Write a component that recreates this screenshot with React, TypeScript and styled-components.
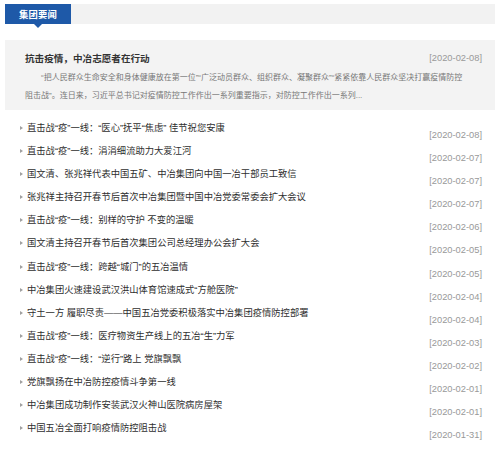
import React from "react";
import styled, { createGlobalStyle } from "styled-components";

const GlobalStyle = createGlobalStyle`
  body {
    margin: 0;
    background: #fff;
    font-family: "Liberation Sans", "Noto Sans CJK SC", sans-serif;
  }
`;

const Page = styled.div`
  width: 490px;
  padding: 4px 5px 0;
`;

const HeaderBar = styled.div`
  display: flex;
  height: 20px;
  background: #f2f2f2;
`;

const Tab = styled.div`
  position: relative;
  width: 66px;
  background: #1e59a8;
  color: #fff;
  font-size: 9.3px;
  font-weight: 700;
  display: flex;
  align-items: center;
  justify-content: center;
  letter-spacing: 0.2px;

  &::after {
    content: "";
    position: absolute;
    left: 29px;
    bottom: -4px;
    border-left: 4px solid transparent;
    border-right: 4px solid transparent;
    border-top: 4px solid #1e59a8;
  }
`;

const Featured = styled.div`
  margin-top: 16px;
  background: #f3f3f3;
  padding: 11px 13px 5px 20px;
  height: 70px;
  box-sizing: border-box;
`;

const FeaturedHead = styled.div`
  display: flex;
  justify-content: space-between;
  align-items: center;
  height: 14px;
`;

const FeaturedTitle = styled.div`
  font-size: 9.6px;
  font-weight: 700;
  color: #333;
`;

const Summary = styled.p`
  margin: 4px 0 0;
  padding-right: 16px;
  font-size: 8px;
  line-height: 18px;
  color: #777;
  text-indent: 2em;
`;

const List = styled.ul`
  list-style: none;
  margin: 11px 0 0;
  padding: 0 13px 0 15px;
`;

const Row = styled.li`
  display: flex;
  justify-content: space-between;
  align-items: flex-start;
  height: 23.1px;
`;

const Title = styled.span`
  display: flex;
  align-items: center;
  font-size: 9.3px;
  line-height: 14px;
  color: #2e2e2e;
  white-space: nowrap;

  &::before {
    content: "";
    width: 0;
    height: 0;
    border-top: 2.5px solid transparent;
    border-bottom: 2.5px solid transparent;
    border-left: 3px solid #a0a0a0;
    margin-right: 4px;
  }
`;

const DateText = styled.span<{ $offset?: number }>`
  font-size: 9.3px;
  line-height: 14px;
  color: #999;
  margin-top: ${(p) => p.$offset ?? 7}px;
  white-space: nowrap;
`;

const news: [string, string][] = [
  ["直击战“疫”一线：“医心”抚平“焦虑” 佳节祝您安康", "2020-02-08"],
  ["直击战“疫”一线：涓涓细流助力大爱江河", "2020-02-07"],
  ["国文清、张兆祥代表中国五矿、中冶集团向中国一冶干部员工致信", "2020-02-07"],
  ["张兆祥主持召开春节后首次中冶集团暨中国中冶党委常委会扩大会议", "2020-02-07"],
  ["直击战“疫”一线：别样的守护 不变的温暖", "2020-02-06"],
  ["国文清主持召开春节后首次集团公司总经理办公会扩大会", "2020-02-05"],
  ["直击战“疫”一线：跨越“城门”的五冶温情", "2020-02-05"],
  ["中冶集团火速建设武汉洪山体育馆速成式“方舱医院”", "2020-02-04"],
  ["守土一方 履职尽责——中国五冶党委积极落实中冶集团疫情防控部署", "2020-02-04"],
  ["直击战“疫”一线：医疗物资生产线上的五冶“生”力军", "2020-02-03"],
  ["直击战“疫”一线：“逆行”路上 党旗飘飘", "2020-02-02"],
  ["党旗飘扬在中冶防控疫情斗争第一线", "2020-02-01"],
  ["中冶集团成功制作安装武汉火神山医院病房屋架", "2020-02-01"],
  ["中国五冶全面打响疫情防控阻击战", "2020-01-31"],
];

export default function App() {
  return (
    <>
      <GlobalStyle />
      <Page>
        <HeaderBar>
          <Tab>集团要闻</Tab>
        </HeaderBar>
        <Featured>
          <FeaturedHead>
            <FeaturedTitle>抗击疫情，中冶志愿者在行动</FeaturedTitle>
            <DateText $offset={0}>[2020-02-08]</DateText>
          </FeaturedHead>
          <Summary>
            “把人民群众生命安全和身体健康放在第一位”“广泛动员群众、组织群众、凝聚群众”“紧紧依靠人民群众坚决打赢疫情防控阻击战”。连日来，习近平总书记对疫情防控工作作出一系列重要指示，对防控工作作出一系列...
          </Summary>
        </Featured>
        <List>
          {news.map(([title, date], i) => (
            <Row key={i}>
              <Title>{title}</Title>
              <DateText>[{date}]</DateText>
            </Row>
          ))}
        </List>
      </Page>
    </>
  );
}
